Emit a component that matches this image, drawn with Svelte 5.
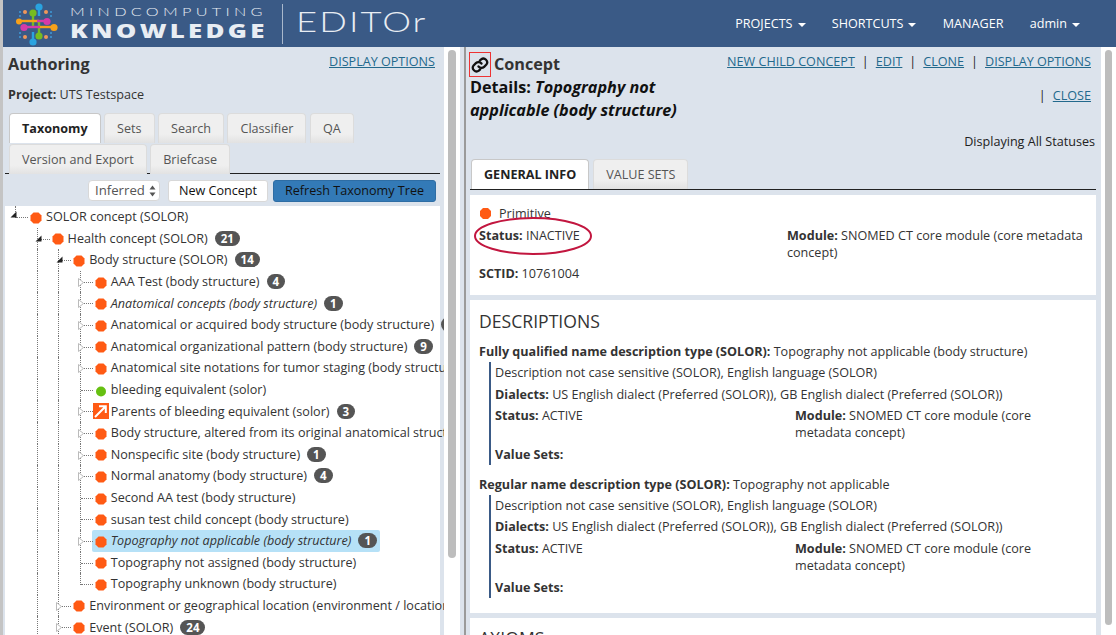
<script>
	const rows = [
		{ depth: 0, label: 'SOLOR concept (SOLOR)', exp: 'open' },
		{ depth: 1, label: 'Health concept (SOLOR)', count: 21, exp: 'open' },
		{ depth: 2, label: 'Body structure (SOLOR)', count: 14, exp: 'open' },
		{ depth: 3, label: 'AAA Test (body structure)', count: 4, exp: 'closed' },
		{ depth: 3, label: 'Anatomical concepts (body structure)', count: 1, exp: 'closed', italic: true },
		{ depth: 3, label: 'Anatomical or acquired body structure (body structure)', count: 12, exp: 'closed' },
		{ depth: 3, label: 'Anatomical organizational pattern (body structure)', count: 9, exp: 'closed' },
		{ depth: 3, label: 'Anatomical site notations for tumor staging (body structure)', exp: 'closed' },
		{ depth: 3, label: 'bleeding equivalent (solor)', icon: 'green' },
		{ depth: 3, label: 'Parents of bleeding equivalent (solor)', count: 3, exp: 'closed', icon: 'link' },
		{ depth: 3, label: 'Body structure, altered from its original anatomical structure (morphologic abnormality)', exp: 'closed' },
		{ depth: 3, label: 'Nonspecific site (body structure)', count: 1, exp: 'closed' },
		{ depth: 3, label: 'Normal anatomy (body structure)', count: 4, exp: 'closed' },
		{ depth: 3, label: 'Second AA test (body structure)' },
		{ depth: 3, label: 'susan test child concept (body structure)' },
		{ depth: 3, label: 'Topography not applicable (body structure)', count: 1, exp: 'closed', italic: true, selected: true },
		{ depth: 3, label: 'Topography not assigned (body structure)' },
		{ depth: 3, label: 'Topography unknown (body structure)', last: true },
		{ depth: 2, label: 'Environment or geographical location (environment / location)', exp: 'closed' },
		{ depth: 2, label: 'Event (SOLOR)', count: 24, exp: 'closed' }
	];

	const leftTabs = ['Taxonomy', 'Sets', 'Search', 'Classifier', 'QA', 'Version and Export', 'Briefcase'];
	const nav = [
		{ label: 'PROJECTS', caret: true },
		{ label: 'SHORTCUTS', caret: true },
		{ label: 'MANAGER' },
		{ label: 'admin', caret: true }
	];
	const descriptions = [
		{
			type: 'Fully qualified name description type (SOLOR):',
			name: 'Topography not applicable (body structure)'
		},
		{
			type: 'Regular name description type (SOLOR):',
			name: 'Topography not applicable'
		}
	];
	const hex = '3,0 8,0 11,3 11,8 8,11 3,11 0,8 0,3';
</script>

<div class="app">
	<header class="topbar">
		<div class="brand">
			<svg class="logo-mark" width="44" height="44" viewBox="0 0 44 44">
				<g stroke-width="2.4" fill="none">
					<path d="M23 4V14" stroke="#29a3e0" />
					<path d="M17 10V26" stroke="#76bc21" />
					<path d="M23 20V34" stroke="#76bc21" />
					<path d="M17 30V40" stroke="#29a3e0" />
					<path d="M3 19H23" stroke="#f7a11a" />
					<path d="M23 25H38" stroke="#f7a11a" />
					<path d="M10 25H24" stroke="#d63aa8" />
					<path d="M21 19H31" stroke="#d63aa8" />
				</g>
				<circle cx="23" cy="5" r="3.6" fill="#29a3e0" />
				<circle cx="17" cy="11" r="3.6" fill="#76bc21" />
				<circle cx="31" cy="19.5" r="3.6" fill="#d63aa8" />
				<circle cx="8" cy="25.5" r="3.6" fill="#d63aa8" />
				<circle cx="3" cy="19.5" r="3" fill="#f7a11a" />
				<circle cx="38" cy="25.5" r="3.6" fill="#f7a11a" />
				<circle cx="23" cy="34" r="3.6" fill="#76bc21" />
				<circle cx="17" cy="40" r="3.6" fill="#29a3e0" />
				<g fill="#f0965a">
					<circle cx="9" cy="10" r="2" /><circle cx="30" cy="10" r="2" />
					<circle cx="9" cy="35" r="2" /><circle cx="30" cy="35" r="2" />
				</g>
				<g fill="#3f9bd8">
					<circle cx="4" cy="10" r="1" /><circle cx="35" cy="10" r="1" />
					<circle cx="4" cy="14" r="1" /><circle cx="35" cy="14" r="1" />
					<circle cx="4" cy="31" r="1" /><circle cx="35" cy="31" r="1" />
					<circle cx="4" cy="35" r="1" /><circle cx="35" cy="35" r="1" />
				</g>
			</svg>
			<div class="wordmark">
				<span class="wm-top">MINDCOMPUTING</span>
				<span class="wm-bottom">KNOWLEDGE</span>
			</div>
			<div class="brand-sep"></div>
			<span class="wm-editor">EDITOr</span>
		</div>
		<nav class="nav">
			{#each nav as item}
				<span class="nav-item">{item.label}{#if item.caret}<i class="caret"></i>{/if}</span>
			{/each}
		</nav>
	</header>

	<main class="content">
		<section class="left">
			<div class="left-head">
				<h2>Authoring</h2>
				<a href="#options">DISPLAY OPTIONS</a>
			</div>
			<p class="project"><b>Project:</b> UTS Testspace</p>
			<div class="tabs left-tabs">
				{#each leftTabs as tab, i}
					<span class="tab" class:active={i === 0}>{tab}</span>
				{/each}
			</div>
			<div class="toolbar">
				<span class="select">Inferred
					<svg width="7" height="12" viewBox="0 0 7 12"><path d="M3.5 0.5L6.5 4.5H0.5ZM3.5 11.5L0.5 7.5H6.5Z" fill="#555" /></svg>
				</span>
				<button class="btn new">New Concept</button>
				<button class="btn primary">Refresh Taxonomy Tree</button>
			</div>
			<div class="tree">
				{#each rows as row}
					<div class="row">
						{#each Array(row.depth) as _, g}
							<span class="guide" class:hidden={g === 0}></span>
						{/each}
						<span class="branch" class:first={row.depth === 0} class:last={row.last}>
							{#if row.exp === 'open'}
								<svg class="exp" width="7" height="7" viewBox="0 0 7 7"><path d="M6.5 0.5V6.5H0.5Z" fill="#222" /></svg>
							{:else if row.exp === 'closed'}
								<svg class="exp" width="6" height="9" viewBox="0 0 6 9"><path d="M0.5 0.5L5.5 4.5L0.5 8.5Z" fill="#fff" stroke="#bbb" /></svg>
							{/if}
						</span>
						<span class="node" class:selected={row.selected} class:italic={row.italic}>
							{#if row.icon === 'green'}
								<svg class="icon" width="14" height="14" viewBox="0 0 14 14"><circle cx="7" cy="7.5" r="5" fill="#66c011" /></svg>
							{:else if row.icon === 'link'}
								<svg class="icon wide" width="16" height="16" viewBox="0 0 16 16">
									<rect width="16" height="16" fill="#ff5a14" />
									<path d="M2 14L12 4M6 3.2H12.8V10" stroke="#fff" stroke-width="2" fill="none" />
								</svg>
							{:else}
								<svg class="icon" width="14" height="14" viewBox="-1.5 -1.5 14 14"><polygon points={hex} fill="#ff5a14" /></svg>
							{/if}
							<span class="label">{row.label}</span>
							{#if row.count}<span class="badge">{row.count}</span>{/if}
						</span>
					</div>
				{/each}
			</div>
		</section>

		<div class="scrollbar"><div class="thumb left-thumb"></div></div>
		<div class="splitter"></div>

		<section class="right">
			<div class="detail-head">
				<div class="detail-title">
					<h2>
						<span class="link-box">
							<svg width="18" height="18" viewBox="0 0 24 24" fill="none" stroke="#111" stroke-width="3" stroke-linecap="round">
								<path d="M10 14a5 5 0 0 0 7.5.5l3-3a5 5 0 0 0-7-7l-1.7 1.7" />
								<path d="M14 10a5 5 0 0 0-7.5-.5l-3 3a5 5 0 0 0 7 7l1.7-1.7" />
							</svg>
						</span>
						Concept
					</h2>
					<h3>Details: <em>Topography not applicable (body structure)</em></h3>
				</div>
				<div class="detail-actions">
					<div class="actions">
						<a href="#new">NEW CHILD CONCEPT</a><i>|</i><a href="#edit">EDIT</a><i>|</i><a href="#clone">CLONE</a><i>|</i><a href="#display">DISPLAY OPTIONS</a>
					</div>
					<div class="actions close"><i>|</i><a href="#close">CLOSE</a></div>
					<div class="statuses">Displaying All Statuses</div>
				</div>
			</div>

			<div class="tabs detail-tabs">
				<span class="tab active upper">GENERAL INFO</span>
				<span class="tab upper">VALUE SETS</span>
			</div>

			<div class="card info">
				<div class="primitive">
					<svg width="11" height="11" viewBox="0 0 11 11"><polygon points={hex} fill="#ff5a14" /></svg>
					Primitive
				</div>
				<div class="info-grid">
					<div><b>Status:</b> INACTIVE</div>
					<div><b>Module:</b> SNOMED CT core module (core metadata concept)</div>
				</div>
				<div class="sctid"><b>SCTID:</b> 10761004</div>
				<svg class="circle" width="120" height="40" viewBox="0 0 120 40">
					<ellipse cx="60" cy="20" rx="58" ry="18" fill="none" stroke="#c2163f" stroke-width="2" />
				</svg>
			</div>

			<div class="card desc">
				<h4>DESCRIPTIONS</h4>
				{#each descriptions as d}
					<div class="desc-item">
						<div class="desc-title"><b>{d.type}</b> {d.name}</div>
						<div class="desc-body">
							<div>Description not case sensitive (SOLOR), English language (SOLOR)</div>
							<div><b>Dialects:</b> US English dialect (Preferred (SOLOR)), GB English dialect (Preferred (SOLOR))</div>
							<div class="desc-grid">
								<div><b>Status:</b> ACTIVE</div>
								<div><b>Module:</b> SNOMED CT core module (core metadata concept)</div>
							</div>
							<div><b>Value Sets:</b></div>
						</div>
					</div>
				{/each}
			</div>

			<div class="card axioms">
				<h4>AXIOMS</h4>
			</div>
		</section>

		<div class="scrollbar outer"><div class="thumb right-thumb"></div></div>
	</main>
</div>

<style>
	:global(body) {
		margin: 0;
		background: #fff;
	}

	.app {
		width: 1116px;
		height: 635px;
		box-sizing: border-box;
		border-left: 3px solid #c4c4c4;
		overflow: hidden;
		display: flex;
		flex-direction: column;
		font-family: 'Open Sans', 'Liberation Sans', sans-serif;
		font-size: 12.6px;
		line-height: 17px;
		color: #333;
	}

	.topbar {
		flex: 0 0 47px;
		display: flex;
		justify-content: space-between;
		background: #3a5a86;
		color: #fff;
	}

	.brand {
		display: flex;
		align-items: center;
		padding-left: 13px;
	}

	.wordmark {
		width: 195px;
		margin-left: 10px;
		display: flex;
		flex-direction: column;
		color: #e8edf3;
	}

	.wm-top {
		font-family: Lato, sans-serif;
		font-weight: 300;
		font-size: 12.5px;
		line-height: 14px;
		letter-spacing: 3.3px;
		white-space: nowrap;
		transform: scaleX(1.3);
		transform-origin: left;
		margin-top: -1px;
	}

	.wm-bottom {
		font-family: 'Open Sans', sans-serif;
		font-weight: 800;
		font-size: 19px;
		line-height: 20px;
		letter-spacing: 2.4px;
		white-space: nowrap;
		transform: scaleX(1.36);
		transform-origin: left;
		margin-top: 2px;
	}

	.brand-sep {
		width: 1px;
		height: 40px;
		margin-left: 17px;
		background: #a9b8cc;
	}

	.wm-editor {
		margin: 0 0 4px 13px;
		font-family: Lato, sans-serif;
		font-weight: 300;
		font-size: 28px;
		letter-spacing: 1.6px;
		color: #e8edf3;
		transform: scaleX(1.3);
		transform-origin: left;
	}

	.nav {
		display: flex;
		align-items: center;
		padding-right: 36px;
		gap: 26.3px;
	}

	.caret {
		display: inline-block;
		margin-left: 5px;
		vertical-align: middle;
		border-top: 4px solid #fff;
		border-left: 4px solid transparent;
		border-right: 4px solid transparent;
	}

	.content {
		flex: 1;
		display: flex;
		min-height: 0;
		background: #dce3ec;
	}

	.left {
		width: 439px;
		flex: none;
		margin-left: 2px;
		overflow: hidden;
		position: relative;
	}

	.left-head {
		display: flex;
		justify-content: space-between;
		width: 427px;
		padding-left: 3px;
		padding-top: 6px;
	}

	.left-head h2 {
		margin-top: -1px;
	}

	h2 {
		margin: 0;
		font-size: 16.2px;
		line-height: 24px;
		font-weight: 700;
	}

	a {
		color: #23698c;
		text-decoration: underline;
	}

	.project {
		margin: 10px 0 0 3px;
		height: 22px;
	}

	.tabs {
		display: flex;
		flex-wrap: wrap;
		border-bottom: 1px solid #222;
	}

	.left-tabs {
		width: 435px;
		margin-top: 5px;
		padding-left: 4px;
		box-sizing: border-box;
		column-gap: 3.5px;
		row-gap: 2px;
	}

	.tab {
		height: 30px;
		box-sizing: border-box;
		padding: 6px 12px;
		border: 1px solid #dcdcdc;
		border-bottom: none;
		border-radius: 4px 4px 0 0;
		background: linear-gradient(#efefef 70%, #e2e2e2);
		color: #555;
		margin-bottom: -1px;
	}

	.tab.active {
		background: #fff;
		color: #222;
		font-weight: 700;
		border-color: #c8c8c8;
	}

	.toolbar {
		width: 431px;
		display: flex;
		justify-content: flex-end;
		align-items: center;
		gap: 5px;
		margin-top: 5px;
		height: 23px;
	}

	.select {
		display: flex;
		align-items: center;
		gap: 4px;
		width: 72px;
		height: 21px;
		box-sizing: border-box;
		padding-left: 6px;
		margin-right: 3px;
		background: #fff;
		border: 1px solid #d8d8d8;
		border-radius: 4px;
		color: #555;
		font-size: 13.2px;
	}

	.btn {
		height: 22px;
		padding: 0;
		font: inherit;
		color: #111;
		background: #fff;
		border: 1px solid #d8d8d8;
		border-radius: 3px;
	}

	.btn.new {
		width: 100px;
	}

	.btn.primary {
		width: 163px;
		background: #337ab7;
		border-color: #2e6da4;
	}

	.tree {
		width: 435px;
		height: 440px;
		margin-top: 4px;
		padding-left: 10px;
		box-sizing: border-box;
		background: #fff;
	}

	.row {
		display: flex;
		height: 21.6px;
		white-space: nowrap;
	}

	.guide {
		flex: 0 0 21.6px;
		box-sizing: border-box;
		border-left: 1px dotted #777;
	}

	.guide.hidden {
		border-color: transparent;
	}

	.branch {
		flex: 0 0 14px;
		position: relative;
		box-sizing: border-box;
		border-left: 1px dotted #777;
	}

	.branch.first,
	.branch.last {
		height: 12px;
	}

	.branch::after {
		content: '';
		position: absolute;
		left: 0;
		right: 1px;
		top: 11px;
		border-top: 1px dotted #777;
	}

	.exp {
		position: absolute;
		left: -3px;
		top: 7px;
		z-index: 1;
	}

	.branch.first .exp {
		left: -6px;
		top: 5px;
	}

	.node {
		display: flex;
		align-items: center;
		height: 21.6px;
		padding-right: 5px;
		border-radius: 2px;
	}

	.node.italic .label {
		font-style: italic;
	}

	.node.selected {
		background: #b6e1f7;
		margin-left: -2px;
		padding-left: 2px;
		padding-right: 3px;
	}

	.icon {
		flex: none;
		margin-top: 2px;
	}

	.icon.wide {
		margin: 0 -1px 0 -1px;
	}

	.label {
		margin-left: 3px;
	}

	.badge {
		margin-left: 7px;
		padding: 0 6px;
		height: 15px;
		line-height: 15px;
		border-radius: 8px;
		background: #555;
		color: #fff;
		font-size: 11.5px;
		font-weight: 700;
		font-style: normal;
	}

	.scrollbar {
		flex: none;
		width: 16px;
		background: #fff;
		padding: 3px 4px 0;
		box-sizing: border-box;
	}

	.thumb {
		background: #bdbdbd;
		border-radius: 4px;
	}

	.left-thumb {
		height: 508px;
	}

	.splitter {
		flex: 0 0 2px;
		box-sizing: border-box;
		margin-left: 4px;
		background: #9a9a9a;
	}

	.right {
		flex: 1;
		min-width: 0;
		padding-right: 5px;
		position: relative;
		overflow: hidden;
	}

	.detail-head {
		display: flex;
		justify-content: space-between;
		height: 112px;
		padding-left: 4px;
	}

	.detail-title {
		width: 222px;
		padding-top: 5px;
	}

	.detail-title h2 {
		position: relative;
		padding-left: 24px;
	}

	.detail-title h3 {
		margin: 0;
		font-size: 16.2px;
		line-height: 23px;
		color: #111;
	}

	.link-box {
		position: absolute;
		left: -1px;
		top: 0;
		width: 22px;
		height: 25px;
		box-sizing: border-box;
		border: 1px solid #e33;
		display: flex;
		align-items: center;
		justify-content: center;
	}

	.detail-actions {
		text-align: right;
		padding-top: 6px;
	}

	.actions i {
		font-style: normal;
		margin: 0 7px;
		color: #222;
	}

	.actions {
		padding-right: 5px;
	}

	.actions.close {
		margin-top: 17px;
	}

	.statuses {
		margin-top: 29px;
		padding-right: 1px;
		color: #222;
	}

	.detail-tabs {
		margin-left: 4px;
		column-gap: 4px;
		padding-left: 1px;
		height: 30px;
	}

	.card {
		background: #fff;
		margin-left: 4px;
		position: relative;
	}

	.info {
		margin-top: 5px;
		height: 100px;
		box-sizing: border-box;
		padding: 10px 9px;
	}

	.primitive {
		display: flex;
		align-items: center;
		gap: 8px;
		padding-left: 1px;
	}

	.info-grid {
		display: grid;
		grid-template-columns: 308px 1fr;
		margin-top: 5px;
	}

	.sctid {
		margin-top: 4px;
	}

	.circle {
		position: absolute;
		left: 3px;
		top: 21px;
	}

	.desc {
		margin-top: 5px;
		height: 313px;
		box-sizing: border-box;
		padding: 9px 9px;
	}

	h4 {
		margin: 0 0 10px;
		font-size: 17.6px;
		line-height: 24px;
		font-weight: 400;
	}

	.desc-item {
		margin-bottom: 10.5px;
	}

	.desc-body {
		margin: 2px 0 0 10px;
		padding-left: 4px;
		border-left: 2px solid #3a5a86;
	}

	.desc-body > div {
		padding: 2px 0;
		margin-bottom: 0.5px;
	}

	.desc-grid {
		display: grid;
		grid-template-columns: 300px 1fr;
		margin-bottom: 1px !important;
	}

	.axioms {
		margin-top: 5px;
		height: 60px;
		padding: 8px 9px;
		box-sizing: border-box;
	}

	.scrollbar.outer {
		width: 15px;
	}

	.right-thumb {
		height: 575px;
	}
</style>
